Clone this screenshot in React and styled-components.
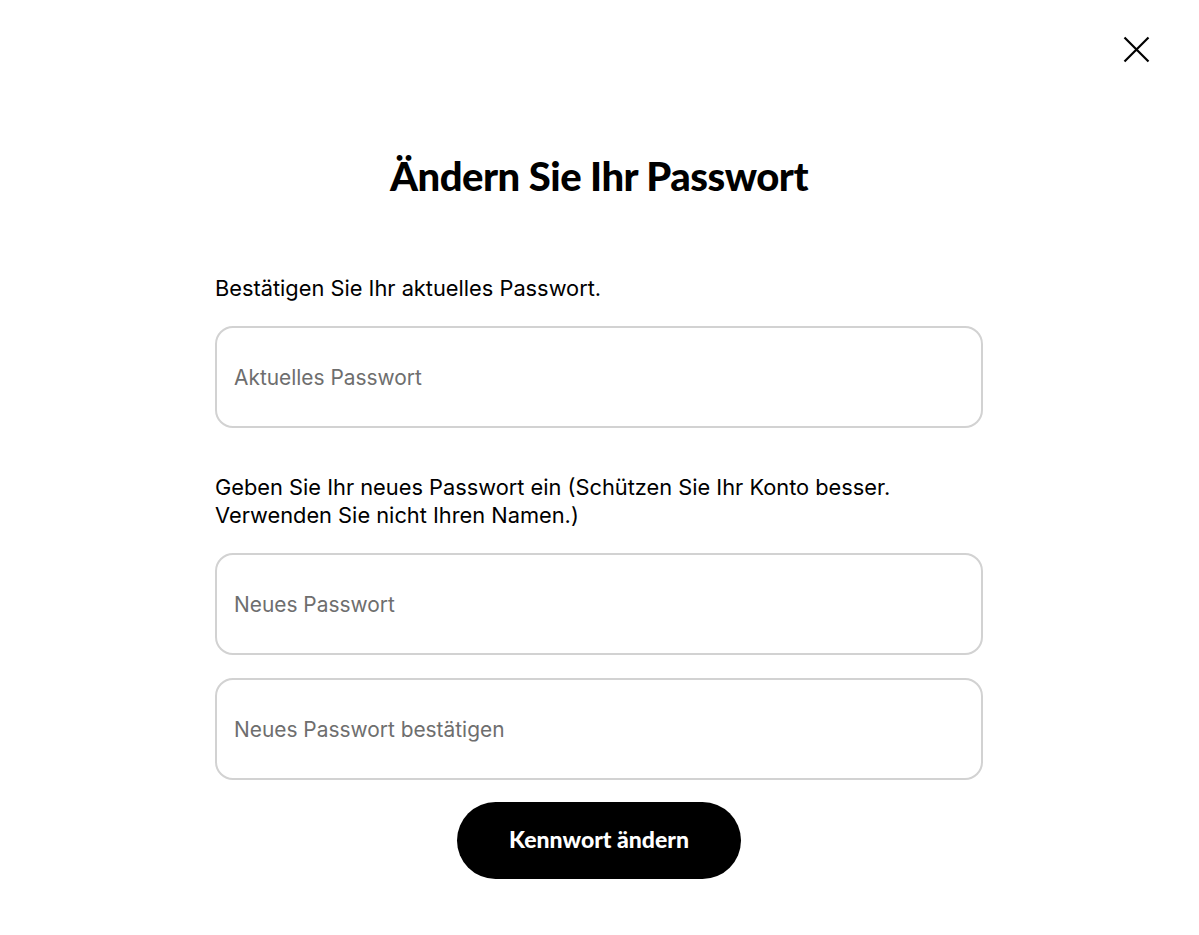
import React from "react";
import styled, { createGlobalStyle } from "styled-components";

const Global = createGlobalStyle`
  html, body { margin: 0; padding: 0; background: #fff; }
  body { font-family: Inter, "Liberation Sans", Arial, sans-serif; color: #000; }
  * { box-sizing: border-box; }
`;

const Page = styled.div`
  position: relative;
  min-height: 935px;
  display: flex;
  flex-direction: column;
  align-items: center;
  padding-top: 152px;
  padding-right: 1px;
`;

const CloseButton = styled.button`
  position: absolute;
  top: 33px;
  right: 47px;
  width: 32px;
  height: 32px;
  padding: 0;
  border: none;
  background: transparent;
  display: flex;
  align-items: center;
  justify-content: center;
  cursor: pointer;
`;

const Title = styled.h1`
  margin: 0;
  font-family: Lato, "Noto Sans", sans-serif;
  font-weight: 900;
  font-size: 40px;
  line-height: 48px;
  letter-spacing: -0.5px;
  text-align: center;
`;

const Form = styled.form`
  width: 768px;
  margin-top: 74px;
  display: flex;
  flex-direction: column;
`;

const Label = styled.p`
  margin: 0 0 ${(p) => p.$gap}px;
  font-size: 21.8px;
  line-height: 28px;
  color: #000;
`;

const Field = styled.input`
  width: 100%;
  height: 102px;
  border: 2px solid #d2d2d2;
  border-radius: 18px;
  padding: 0 17px;
  font-family: Inter, "Liberation Sans", Arial, sans-serif;
  font-size: 20.9px;
  color: #000;
  background: #fff;
  outline: none;
  margin-bottom: ${(p) => p.$gap}px;
  &::placeholder { color: #6e6e6e; }
`;

const Submit = styled.button`
  align-self: center;
  width: 284px;
  height: 77px;
  padding: 0 0 3px;
  border: none;
  border-radius: 39px;
  background: #000;
  color: #fff;
  font-family: Lato, "Noto Sans", sans-serif;
  font-weight: 900;
  font-size: 23px;
  letter-spacing: 0;
  cursor: pointer;
`;

export default function App() {
  return (
    <>
      <Global />
      <Page>
        <CloseButton aria-label="Schließen">
          <svg width="27" height="27" viewBox="0 0 27 27">
            <path d="M1.5 1.5 L25.5 25.5 M25.5 1.5 L1.5 25.5" stroke="#000" strokeWidth="2.2" fill="none" />
          </svg>
        </CloseButton>
        <Title>Ändern Sie Ihr Passwort</Title>
        <Form onSubmit={(e) => e.preventDefault()}>
          <Label $gap={24}>Bestätigen Sie Ihr aktuelles Passwort.</Label>
          <Field type="password" placeholder="Aktuelles Passwort" $gap={45} />
          <Label $gap={24}>
            Geben Sie Ihr neues Passwort ein (Schützen Sie Ihr Konto besser.
            <br />
            Verwenden Sie nicht Ihren Namen.)
          </Label>
          <Field type="password" placeholder="Neues Passwort" $gap={23} />
          <Field type="password" placeholder="Neues Passwort bestätigen" $gap={22} />
          <Submit type="submit">Kennwort ändern</Submit>
        </Form>
      </Page>
    </>
  );
}
